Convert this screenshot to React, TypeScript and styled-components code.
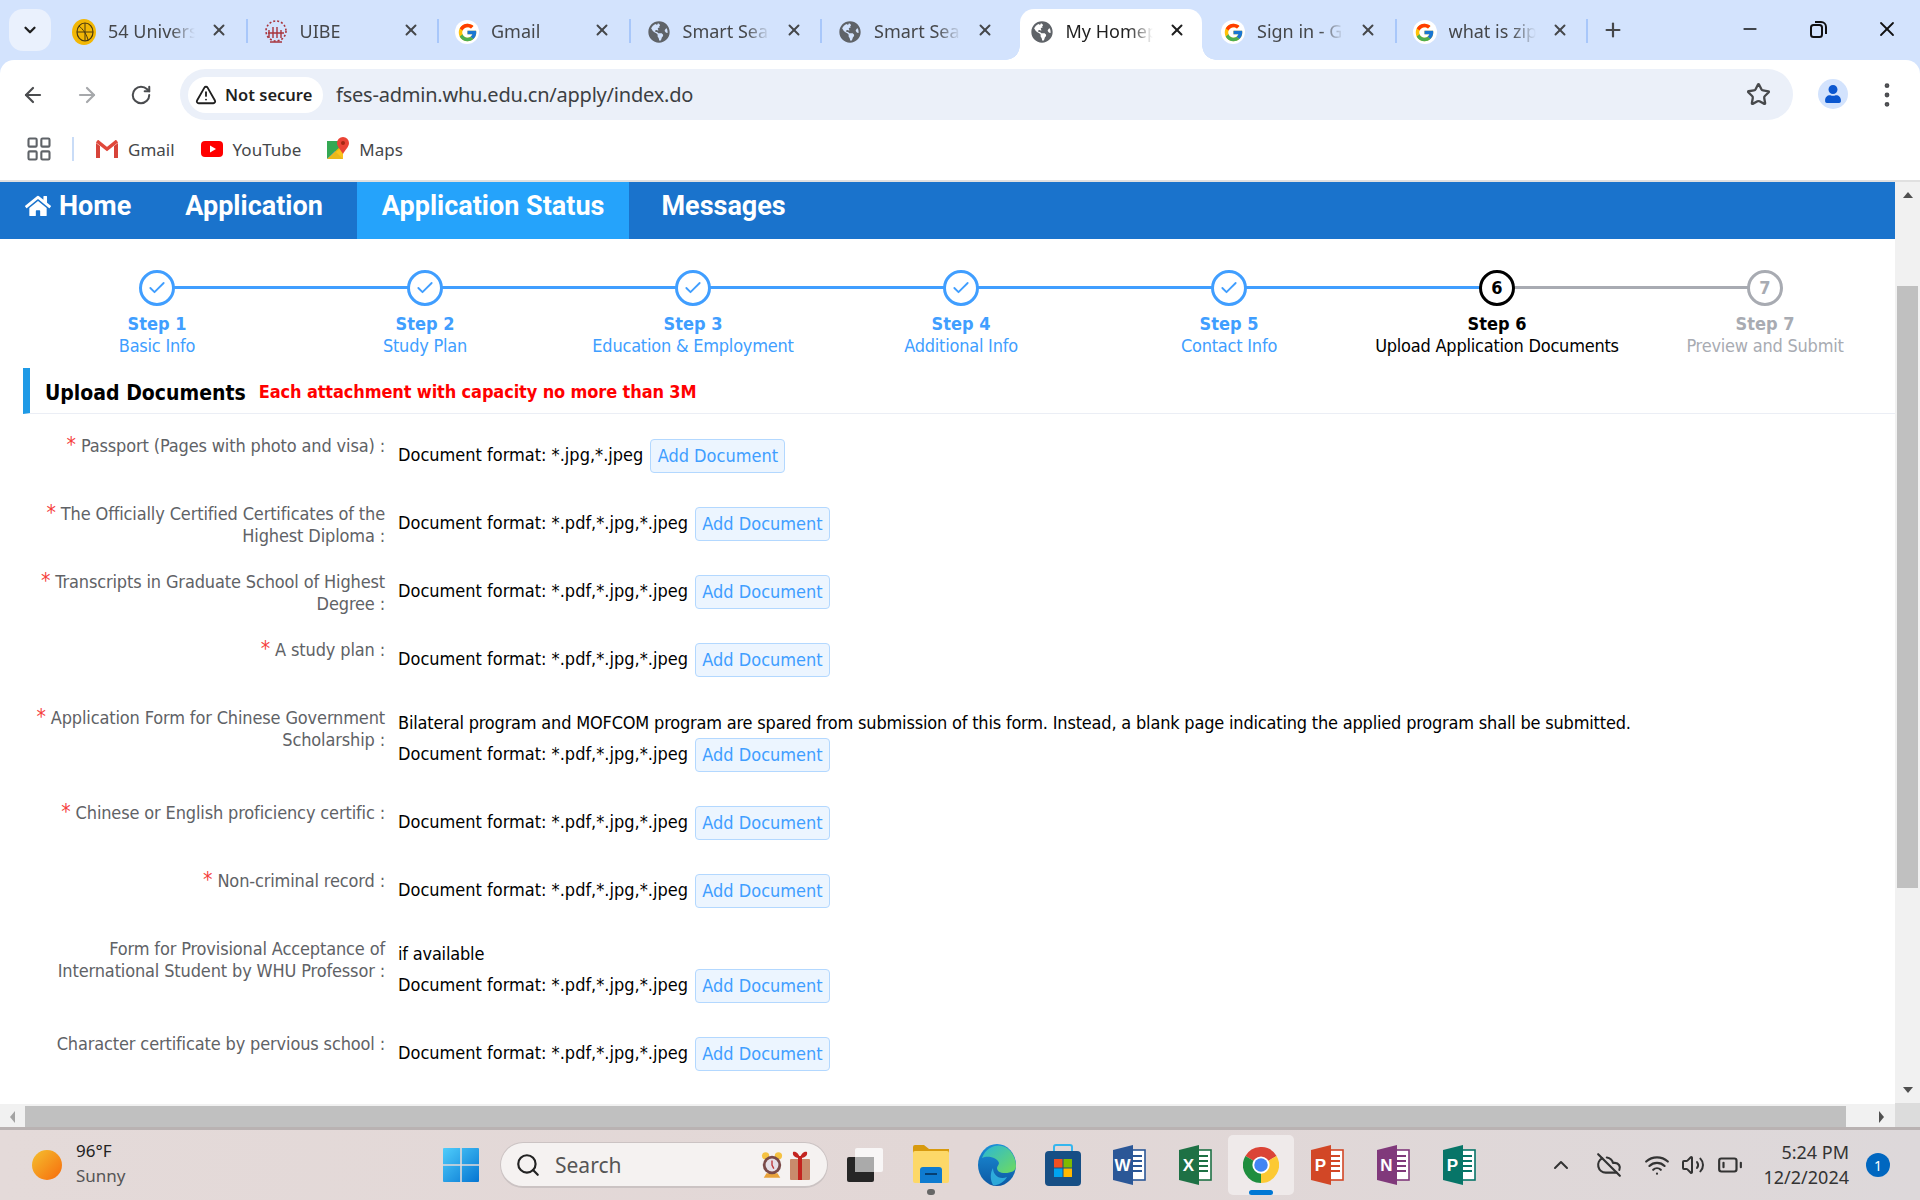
import React from 'react';
import styled, { createGlobalStyle } from 'styled-components';
import {
  ArrowLeft,
  ArrowRight,
  BatteryLow,
  Check,
  ChevronDown,
  ChevronUp,
  CloudOff,
  EllipsisVertical,
  LayoutGrid,
  Minus,
  Plus,
  RotateCw,
  Search,
  Star,
  TriangleAlert,
  Volume2,
  Wifi,
  X,
} from 'lucide-react';
import { FaGlobeAmericas, FaHome, FaUser } from 'react-icons/fa';
import { FcGoogle } from 'react-icons/fc';

const CHROME_FONT = `"Noto Sans", "Open Sans", sans-serif`;
const PAGE_FONT = `"DejaVu Sans Condensed", "DejaVu Sans", sans-serif`;

const GlobalStyle = createGlobalStyle`
  html, body {
    margin: 0;
    width: 1920px;
    height: 1200px;
    overflow: hidden;
    background: #d3e3fd;
  }
  * { box-sizing: border-box; }
`;

const Screen = styled.div`
  width: 1920px;
  height: 1200px;
  display: flex;
  flex-direction: column;
  font-family: ${CHROME_FONT};
`;

/* ---- browser chrome ---- */

const TabStrip = styled.div`
  height: 60px;
  padding: 9px 0 0 9px;
  display: flex;
  background: #d3e3fd;
`;

const TabMenu = styled.div`
  width: 42px;
  height: 42px;
  margin-right: 4px;
  border-radius: 14px;
  background: #eaf1fd;
  color: #1f1f1f;
  display: flex;
  align-items: center;
  justify-content: center;
`;

const Tab = styled.div<{ $active?: boolean; $noSep?: boolean }>`
  position: relative;
  width: 191.5px;
  height: 51px;
  padding: 0 0 7px 17px;
  display: flex;
  align-items: center;
  flex-shrink: 0;
  color: ${(p) => (p.$active ? '#1f1f1f' : '#45474a')};
  z-index: ${(p) => (p.$active ? 1 : 0)};

  &::before {
    content: '';
    display: ${(p) => (p.$active ? 'block' : 'none')};
    position: absolute;
    left: 7px;
    right: 2px;
    top: 0;
    bottom: 0;
    background: #fff;
    border-radius: 14px 14px 0 0;
  }

  &::after {
    content: '';
    display: ${(p) => (p.$noSep ? 'none' : 'block')};
    position: absolute;
    right: -1px;
    top: 10px;
    width: 2px;
    height: 24px;
    background: #a8c7fa;
  }
`;

const TabFlare = styled.span<{ $side: 'left' | 'right' }>`
  position: absolute;
  bottom: 0;
  width: 14px;
  height: 14px;
  ${(p) =>
    p.$side === 'left'
      ? 'left: -7px; background: radial-gradient(circle at 0 0, transparent 13.5px, #fff 14px);'
      : 'right: -12px; background: radial-gradient(circle at 100% 0, transparent 13.5px, #fff 14px);'}
`;

const Favicon = styled.span`
  position: relative;
  width: 24px;
  height: 24px;
  margin: 2px 12px 0 0;
  flex-shrink: 0;
  display: flex;
  align-items: center;
  justify-content: center;
  color: #5f6368;
`;

const GoogleBadge = styled.span`
  width: 24px;
  height: 24px;
  border-radius: 50%;
  background: #fff;
  display: flex;
  align-items: center;
  justify-content: center;
`;

const TabTitle = styled.span`
  position: relative;
  width: 87px;
  overflow: hidden;
  white-space: nowrap;
  font-size: 18px;
  -webkit-mask-image: linear-gradient(to right, #000 72%, transparent 100%);
  mask-image: linear-gradient(to right, #000 72%, transparent 100%);
`;

const TabClose = styled.span`
  position: relative;
  width: 20px;
  height: 20px;
  margin: 0 0 2px 14px;
  display: flex;
  align-items: center;
  justify-content: center;
`;

const NewTab = styled.div`
  margin: 9px 0 0 14px;
  width: 24px;
  height: 24px;
  color: #45474a;
  display: flex;
  align-items: center;
  justify-content: center;
`;

const WindowControls = styled.div`
  margin-left: auto;
  margin-top: -9px;
  display: flex;
`;

const WindowButton = styled.div`
  width: 68px;
  height: 58px;
  color: #111;
  display: flex;
  align-items: center;
  justify-content: center;

  &:last-child {
    width: 66px;
    margin-left: 2px;
  }
`;

const Toolbar = styled.div`
  height: 69px;
  padding: 9px 17px 0 6px;
  display: flex;
  background: #fff;
  border-radius: 14px 14px 0 0;
`;

const ToolButton = styled.div<{ $muted?: boolean }>`
  width: 54px;
  height: 51px;
  color: ${(p) => (p.$muted ? '#a6a8ab' : '#4a4c4f')};
  display: flex;
  align-items: center;
  justify-content: center;
`;

const AddressBar = styled.div`
  flex: 1;
  height: 51px;
  margin-left: 12px;
  padding: 0 22px 0 8px;
  border-radius: 26px;
  background: #ebf0f9;
  display: flex;
  align-items: center;
`;

const SecurityChip = styled.div`
  width: 135px;
  height: 36px;
  padding-left: 7px;
  border-radius: 18px;
  background: #fff;
  color: #1f1f1f;
  font-size: 16.5px;
  font-weight: 600;
  display: flex;
  align-items: center;
  gap: 8px;
`;

const UrlText = styled.span`
  margin-left: 13px;
  font-size: 20px;
  letter-spacing: -0.22px;
  color: #3c3f43;
  flex: 1;
`;

const Avatar = styled.div`
  width: 30px;
  height: 30px;
  margin: 10px 0 0 25px;
  border-radius: 50%;
  background: #d3e3fd;
  color: #0b57d0;
  display: flex;
  align-items: center;
  justify-content: center;
`;

const MenuDots = styled.div`
  width: 32px;
  height: 51px;
  margin-left: 23px;
  color: #4a4c4f;
  display: flex;
  align-items: center;
  justify-content: center;
`;

const BookmarkBar = styled.div`
  height: 53px;
  padding: 0 0 11px 25px;
  background: #fff;
  border-bottom: 2px solid #e0e0e0;
  display: flex;
  align-items: center;
  color: #45474a;
  font-size: 17px;
`;

const AppsDivider = styled.span`
  width: 2px;
  height: 24px;
  margin: 0 22px 0 19px;
  background: #c9dcf7;
`;

const Bookmark = styled.span`
  margin-right: 26px;
  display: flex;
  align-items: center;
  gap: 10px;
`;

/* ---- page ---- */

const PageArea = styled.div`
  flex: 1;
  min-height: 0;
  display: flex;
  background: #fff;
`;

const Viewport = styled.div`
  flex: 1;
  min-width: 0;
  overflow: hidden;
  font-family: ${PAGE_FONT};
  font-stretch: condensed;
  font-size: 18px;
  line-height: 22px;
`;

const NavBar = styled.nav`
  height: 57px;
  background: #1a73cc;
  display: flex;
  font-family: Roboto, "Liberation Sans", sans-serif;
  font-stretch: normal;
`;

const NavItem = styled.a<{ $active?: boolean }>`
  padding: 0 25px 9px;
  margin-right: ${(p) => (p.$active ? 7 : 9)}px;
  background: ${(p) => (p.$active ? '#25a3fb' : 'transparent')};
  color: #fff;
  font-size: 27px;
  font-weight: 700;
  display: flex;
  align-items: center;
  gap: 8px;

  &:first-child {
    margin-right: 4px;
  }
`;

const Stepper = styled.div`
  margin: 31px 0 11px 23px;
  width: 1876px;
  display: grid;
  grid-template-columns: repeat(7, 268px);
`;

type StepState = 'done' | 'current' | 'todo';

const stepColor = (s: StepState) =>
  s === 'done' ? '#409eff' : s === 'current' ? '#000' : '#a8abb2';

const Step = styled.div<{ $state: StepState; $line?: StepState }>`
  position: relative;
  display: flex;
  flex-direction: column;
  align-items: center;
  color: ${(p) => stepColor(p.$state)};

  &::after {
    content: '';
    display: ${(p) => (p.$line ? 'block' : 'none')};
    position: absolute;
    left: 50%;
    top: 16px;
    width: 100%;
    height: 3px;
    background: ${(p) => (p.$line ? stepColor(p.$line) : 'none')};
  }
`;

const StepCircle = styled.div`
  position: relative;
  z-index: 1;
  width: 36px;
  height: 36px;
  margin-bottom: 7px;
  border: 3px solid currentColor;
  border-radius: 50%;
  background: #fff;
  font-weight: 700;
  font-size: 18px;
  display: flex;
  align-items: center;
  justify-content: center;
`;

const StepTitle = styled.div`
  font-weight: 700;
`;

const StepDesc = styled.div`
  letter-spacing: -0.22px;
`;

const SectionHead = styled.div`
  height: 46px;
  margin-left: 23px;
  padding: 4px 0 0 15px;
  border-left: 7px solid #1f9ae6;
  border-bottom: 1px solid #ebeef5;
  display: flex;
  align-items: center;
  gap: 13px;
`;

const SectionTitle = styled.h2`
  margin: 0;
  font-size: 21px;
  font-weight: 700;
  color: #000;
`;

const SectionHint = styled.span`
  margin-bottom: 2px;
  font-weight: 700;
  letter-spacing: -0.12px;
  color: #f00;
`;

const Form = styled.div`
  margin: 21px 0 0 25px;
  display: flex;
  flex-direction: column;
  gap: 30px;
`;

const Row = styled.div`
  display: grid;
  grid-template-columns: 360px 1fr;
  column-gap: 13px;
`;

/* two-line labels run 6px past the field, so the rows stay evenly spaced */
const Label = styled.label`
  margin-bottom: -6px;
  text-align: right;
  color: #606266;
  letter-spacing: -0.14px;
`;

const Required = styled.span`
  color: #f5403c;
  font-size: 21px;
  line-height: 0;
  margin-right: 5px;
`;

const Field = styled.div`
  padding-top: 4px;
  color: #000;
`;

const Note = styled.div`
  margin: 1px 0 4px;
  letter-spacing: -0.19px;
`;

const DocLine = styled.div`
  display: flex;
  align-items: center;
  gap: 7px;
`;

const DocFormat = styled.span`
  margin-bottom: 2px;
`;

const AddButton = styled.button`
  height: 34px;
  width: 135px;
  padding: 0;
  border: 1px solid #b3d8ff;
  border-radius: 4px;
  background: #ecf5ff;
  color: #409eff;
  font: inherit;
`;

/* ---- scrollbars ---- */

const VScroll = styled.div`
  width: 25px;
  background: #f1f1f1;
  display: flex;
  flex-direction: column;
  align-items: center;
`;

const VThumb = styled.div`
  width: 21px;
  height: 602px;
  margin-top: 88px;
  margin-bottom: auto;
  background: #c0c0c0;
`;

const Arrow = styled.span<{ $dir: 'up' | 'down' | 'left' | 'right' }>`
  width: 0;
  height: 0;
  flex-shrink: 0;
  border-style: solid;
  border-color: transparent;
  ${(p) => {
    switch (p.$dir) {
      case 'up':
        return 'border-width: 0 5px 6px; border-bottom-color: #505050; margin-top: 10px;';
      case 'down':
        return 'border-width: 6px 5px 0; border-top-color: #505050; margin-bottom: 11px;';
      case 'left':
        return 'border-width: 6px 5px 6px 0; border-right-color: #a3a3a3;';
      default:
        return 'border-width: 6px 0 6px 5px; border-left-color: #505050;';
    }
  }}
`;

const HScroll = styled.div`
  height: 23px;
  padding-top: 2px;
  background: #f1f1f1;
  display: flex;
  align-items: center;
`;

const HEnd = styled.div<{ $w: number; $pad: number }>`
  width: ${(p) => p.$w}px;
  height: 100%;
  padding-left: ${(p) => p.$pad}px;
  flex-shrink: 0;
  display: flex;
  align-items: center;
`;

const HThumb = styled.div`
  flex: 1;
  height: 100%;
  background: #c0c0c0;
`;

const HCorner = styled.div`
  width: 25px;
  height: 25px;
  margin-top: -2px;
  background: #dcdcdc;
`;

/* ---- taskbar ---- */

const Taskbar = styled.footer`
  height: 73px;
  border-top: 3px solid #b9b2b2;
  background: linear-gradient(90deg, #e4dad9, #e2d7d6 50%, #ddd8da);
  display: flex;
  align-items: center;
  color: #222;
`;

const Weather = styled.div`
  width: 428px;
  padding-left: 32px;
  display: flex;
  align-items: center;
  gap: 14px;
`;

const Sun = styled.span`
  width: 30px;
  height: 30px;
  border-radius: 50%;
  background: linear-gradient(135deg, #f4c02f, #f76b0c);
`;

const WeatherText = styled.div`
  font-size: 17px;
  line-height: 25px;
  margin-top: -4px;
`;

const Faded = styled.div`
  color: #555;
`;

const Slot = styled.div<{ $on?: boolean }>`
  position: relative;
  width: 66px;
  height: 60px;
  flex-shrink: 0;
  border-radius: 5px;
  background: ${(p) => (p.$on ? '#efeaea' : 'transparent')};
  display: flex;
  align-items: center;
  justify-content: center;
`;

const Indicator = styled.span<{ $blue?: boolean }>`
  position: absolute;
  bottom: 0;
  left: 50%;
  transform: translateX(-50%);
  width: ${(p) => (p.$blue ? 24 : 8)}px;
  height: ${(p) => (p.$blue ? 5 : 6)}px;
  border-radius: 3px;
  background: ${(p) => (p.$blue ? '#0078d4' : '#666')};
`;

const SearchPill = styled.div`
  width: 328px;
  height: 46px;
  margin: 0 4px 0 6px;
  padding: 0 16px 0 14px;
  flex-shrink: 0;
  border: 1px solid #cbc3c3;
  border-bottom-width: 2px;
  border-radius: 23px;
  background: #f5f2f1;
  color: #555;
  font-size: 21px;
  display: flex;
  align-items: center;
  gap: 14px;
`;

const PillArt = styled.span`
  margin-left: auto;
  display: flex;
  gap: 6px;
`;

const Tray = styled.div`
  flex: 1;
  padding: 0 30px 0 45px;
  display: flex;
  align-items: center;
  color: #333;
`;

const TrayIcon = styled.span<{ $w: number }>`
  width: ${(p) => p.$w}px;
  flex-shrink: 0;
  display: flex;
  justify-content: center;
`;

const Clock = styled.div`
  margin: 0 17px 0 auto;
  text-align: right;
  font-size: 18px;
  line-height: 25px;
`;

const Badge = styled.span`
  width: 24px;
  height: 24px;
  border-radius: 50%;
  background: #0067c0;
  color: #fff;
  font-size: 14px;
  display: flex;
  align-items: center;
  justify-content: center;
`;

/* ---- drawings ---- */

const RestoreIcon = () => (
  <svg width="17" height="17" viewBox="0 0 17 17" fill="none" stroke="currentColor" strokeWidth="2">
    <rect x="1" y="4" width="11" height="12" rx="2.5" />
    <path d="M5 1h6a5 5 0 0 1 5 5v7" />
  </svg>
);

const GmailIcon = () => (
  <svg width="22" height="18" viewBox="0 0 22 18">
    <path d="M0 3v15h4V6z" fill="#d7443a" />
    <path d="M22 3v15h-4V6z" fill="#d7443a" />
    <path d="M1 1l10 8 10-8" fill="none" stroke="#e0483b" strokeWidth="3.4" />
  </svg>
);

const YoutubeIcon = () => (
  <svg width="22" height="16" viewBox="0 0 22 16">
    <rect width="22" height="16" rx="4" fill="#f00" />
    <path d="M9 4.5l6 3.5-6 3.5z" fill="#fff" />
  </svg>
);

const MapsIcon = () => (
  <svg width="22" height="24" viewBox="0 0 22 24">
    <path d="M0 4h13v8L0 22z" fill="#34a853" />
    <path d="M0 22l8-8 8 8z" fill="#4c8bf5" />
    <path d="M0 22L16 7v15z" fill="#fbbc04" opacity=".9" />
    <path d="M16 0a6 6 0 0 1 6 6c0 4-4 7-6 11-2-4-6-7-6-11a6 6 0 0 1 6-6z" fill="#ea4335" />
    <circle cx="16" cy="6" r="2" fill="#a52714" />
  </svg>
);

const WindowsLogo = () => (
  <svg width="36" height="36" viewBox="0 0 36 36">
    <defs>
      <linearGradient id="winBlue" x1="0" y1="0" x2="1" y2="1">
        <stop offset="0" stopColor="#4fcdfb" />
        <stop offset="1" stopColor="#0575d2" />
      </linearGradient>
    </defs>
    <path d="M1 1h16.2v16.2H0V2a1 1 0 0 1 1-1zM18.8 1H35a1 1 0 0 1 1 1v15.2H18.8zM0 18.8h17.2V35H1a1 1 0 0 1-1-1zM18.8 18.8H36V34a1 1 0 0 1-1 1H18.8z" fill="url(#winBlue)" />
  </svg>
);

const AlarmIcon = () => (
  <svg width="22" height="30" viewBox="0 0 24 30">
    <circle cx="5" cy="5" r="4" fill="#f5c242" />
    <circle cx="19" cy="5" r="4" fill="#f5c242" />
    <path d="M6 24h12l3 5H3z" fill="#e8a23a" />
    <circle cx="12" cy="15" r="10" fill="#7a4a48" />
    <circle cx="12" cy="15" r="7" fill="#e5dfe6" />
    <path d="M12 10v5l2 4" stroke="#c0393b" strokeWidth="1.5" fill="none" />
  </svg>
);

const GiftIcon = () => (
  <svg width="22" height="30" viewBox="0 0 22 30">
    <rect x="1" y="9" width="20" height="21" rx="1" fill="#c98a6c" />
    <rect x="9" y="6" width="4" height="24" fill="#c3231f" />
    <path d="M11 8C7 8 3 6 4 2c3-1 6 2 7 6zm0 0c4 0 8-2 7-6-3-1-6 2-7 6z" fill="#c3231f" />
  </svg>
);

const TaskViewIcon = () => (
  <svg width="36" height="34" viewBox="0 0 36 34">
    <rect x="0" y="9" width="27" height="25" rx="2" fill="#262626" />
    <rect x="8" y="0" width="28" height="24" rx="2" fill="#f8f6f6" />
    <rect x="8" y="9" width="19" height="15" fill="#aaa" />
  </svg>
);

const FolderIcon = () => (
  <svg width="36" height="42" viewBox="0 0 36 42">
    <path d="M0 3a2 2 0 0 1 2-2h9l5 4h20v6H0z" fill="#d89a0e" />
    <rect x="0" y="7" width="36" height="32" rx="2" fill="#fdd868" />
    <path d="M7 39V26a3 3 0 0 1 3-3h16a3 3 0 0 1 3 3v13z" fill="#0f7bd0" />
    <rect x="12" y="29" width="12" height="2" fill="#063f72" />
  </svg>
);

const EdgeIcon = () => (
  <svg width="38" height="42" viewBox="0 0 38 42">
    <defs>
      <linearGradient id="edgeBlue" x1="0" y1="0" x2="0" y2="1">
        <stop offset="0" stopColor="#1c8fd8" />
        <stop offset="1" stopColor="#0c59a4" />
      </linearGradient>
      <linearGradient id="edgeGreen" x1="0" y1="0" x2="1" y2="1">
        <stop offset="0" stopColor="#2bb7d8" />
        <stop offset="1" stopColor="#6fdb5d" />
      </linearGradient>
    </defs>
    <ellipse cx="19" cy="21" rx="19" ry="21" fill="url(#edgeBlue)" />
    <path d="M4 14C8 3 18 0 24 2c9 2 14 12 14 20 0 5-5 7-11 7-5 0-8-2-8-5 0-2 2-3 2-5-1-5-11-8-17-5z" fill="url(#edgeGreen)" />
    <path d="M15 24c0 7 6 12 14 9-3 5-9 9-14 8-3-5-3-12 0-17z" fill="#38c2e8" opacity=".75" />
  </svg>
);

const StoreIcon = () => (
  <svg width="36" height="42" viewBox="0 0 36 42">
    <path d="M9 8V3a2 2 0 0 1 2-2h14a2 2 0 0 1 2 2v5" fill="none" stroke="#35b6ee" strokeWidth="2" />
    <rect x="0" y="7" width="36" height="35" rx="4" fill="#174f85" />
    <rect x="9" y="15" width="8.5" height="8.5" fill="#f25022" />
    <rect x="18.5" y="15" width="8.5" height="8.5" fill="#7fba00" />
    <rect x="9" y="24.5" width="8.5" height="8.5" fill="#00a4ef" />
    <rect x="18.5" y="24.5" width="8.5" height="8.5" fill="#ffb900" />
  </svg>
);

const OfficeIcon = ({ letter, color }: { letter: string; color: string }) => (
  <svg width="33" height="40" viewBox="0 0 33 40">
    <rect x="16" y="5" width="16" height="30" fill="#fff" stroke={color} strokeWidth="1.6" />
    <path d="M20 11h9M20 16h9M20 21h9M20 26h9" stroke={color} strokeWidth="2" />
    <path d="M0 5L20 0v40L0 35z" fill={color} />
    <text x="9.5" y="26" fill="#fff" fontSize="17" fontWeight="700" textAnchor="middle" fontFamily="Liberation Sans, sans-serif">
      {letter}
    </text>
  </svg>
);

const ChromeIcon = () => (
  <svg width="36" height="36" viewBox="0 0 48 48">
    <path d="M24 24L3.2 12A24 24 0 0 1 44.8 12z" fill="#db4437" />
    <path d="M24 24L44.8 12A24 24 0 0 1 24 48z" fill="#fcc934" />
    <path d="M24 24L24 48A24 24 0 0 1 3.2 12z" fill="#1e8e3e" />
    <circle cx="24" cy="24" r="11.5" fill="#fff" />
    <circle cx="24" cy="24" r="9" fill="#4285f4" />
  </svg>
);

/* ---- data ---- */

interface TabData {
  title: string;
  icon: 'globe' | 'google' | 'gold' | 'uibe';
  active?: boolean;
  noSep?: boolean;
}

const tabs: TabData[] = [
  { title: '54 Universities', icon: 'gold' },
  { title: 'UIBE', icon: 'uibe' },
  { title: 'Gmail', icon: 'google' },
  { title: 'Smart Search', icon: 'globe' },
  { title: 'Smart Search', icon: 'globe', noSep: true },
  { title: 'My Homepage', icon: 'globe', active: true, noSep: true },
  { title: 'Sign in - Google', icon: 'google' },
  { title: 'what is zip code', icon: 'google' },
];

const TabIcon = ({ icon }: { icon: TabData['icon'] }) => {
  if (icon === 'globe') return <FaGlobeAmericas size={22} />;
  if (icon === 'google') {
    return (
      <GoogleBadge>
        <FcGoogle size={21} />
      </GoogleBadge>
    );
  }
  if (icon === 'gold') {
    return (
      <svg width="24" height="26" viewBox="0 0 24 26">
        <ellipse cx="12" cy="13" rx="12" ry="13" fill="#f2b705" />
        <ellipse cx="13" cy="13" rx="8" ry="9" fill="none" stroke="#4a3a10" strokeWidth="1.2" />
        <path d="M5 13h16M13 4v18M7 7c4 3 8 9 9 14" fill="none" stroke="#4a3a10" strokeWidth="1" />
      </svg>
    );
  }
  return (
    <svg width="24" height="26" viewBox="0 0 24 26">
      <circle cx="12" cy="12" r="10" fill="none" stroke="#a8343c" strokeWidth="1.6" strokeDasharray="2 2" />
      <path d="M5 19V11M9 19V8M13 19V8M17 19v-8M4 14h16M6 23h12" stroke="#a8343c" strokeWidth="1.4" />
    </svg>
  );
};

const steps: { title: string; desc: string; state: StepState; line?: StepState }[] = [
  { title: 'Step 1', desc: 'Basic Info', state: 'done', line: 'done' },
  { title: 'Step 2', desc: 'Study Plan', state: 'done', line: 'done' },
  { title: 'Step 3', desc: 'Education & Employment', state: 'done', line: 'done' },
  { title: 'Step 4', desc: 'Additional Info', state: 'done', line: 'done' },
  { title: 'Step 5', desc: 'Contact Info', state: 'done', line: 'done' },
  { title: 'Step 6', desc: 'Upload Application Documents', state: 'current', line: 'todo' },
  { title: 'Step 7', desc: 'Preview and Submit', state: 'todo' },
];

const PDF_FORMAT = 'Document format: *.pdf,*.jpg,*.jpeg';

const documents: { label: string; required?: boolean; note?: string; format?: string }[] = [
  { label: 'Passport (Pages with photo and visa) :', required: true, format: 'Document format: *.jpg,*.jpeg' },
  { label: 'The Officially Certified Certificates of the Highest Diploma :', required: true },
  { label: 'Transcripts in Graduate School of Highest Degree :', required: true },
  { label: 'A study plan :', required: true },
  {
    label: 'Application Form for Chinese Government Scholarship :',
    required: true,
    note: 'Bilateral program and MOFCOM program are spared from submission of this form. Instead, a blank page indicating the applied program shall be submitted.',
  },
  { label: 'Chinese or English proficiency certific :', required: true },
  { label: 'Non-criminal record :', required: true },
  { label: 'Form for Provisional Acceptance of International Student by WHU Professor :', note: 'if available' },
  { label: 'Character certificate by pervious school :' },
];

const App: React.FC = () => (
  <Screen>
    <GlobalStyle />
    <TabStrip>
      <TabMenu>
        <ChevronDown size={18} strokeWidth={3} />
      </TabMenu>
      {tabs.map((tab, i) => (
        <Tab key={i} $active={tab.active} $noSep={tab.noSep}>
          {tab.active && <TabFlare $side="left" />}
          {tab.active && <TabFlare $side="right" />}
          <Favicon>
            <TabIcon icon={tab.icon} />
          </Favicon>
          <TabTitle>{tab.title}</TabTitle>
          <TabClose>
            <X size={18} strokeWidth={2.6} />
          </TabClose>
        </Tab>
      ))}
      <NewTab>
        <Plus size={22} strokeWidth={2.4} />
      </NewTab>
      <WindowControls>
        <WindowButton>
          <Minus size={20} strokeWidth={2} />
        </WindowButton>
        <WindowButton>
          <RestoreIcon />
        </WindowButton>
        <WindowButton>
          <X size={24} strokeWidth={1.8} />
        </WindowButton>
      </WindowControls>
    </TabStrip>

    <Toolbar>
      <ToolButton>
        <ArrowLeft size={24} strokeWidth={2.2} />
      </ToolButton>
      <ToolButton $muted>
        <ArrowRight size={24} strokeWidth={2.2} />
      </ToolButton>
      <ToolButton>
        <RotateCw size={22} strokeWidth={2.2} />
      </ToolButton>
      <AddressBar>
        <SecurityChip>
          <TriangleAlert size={22} strokeWidth={2} />
          Not secure
        </SecurityChip>
        <UrlText>fses-admin.whu.edu.cn/apply/index.do</UrlText>
        <Star size={25} strokeWidth={2.2} color="#47494c" />
      </AddressBar>
      <Avatar>
        <FaUser size={18} />
      </Avatar>
      <MenuDots>
        <EllipsisVertical size={32} strokeWidth={1.6} />
      </MenuDots>
    </Toolbar>

    <BookmarkBar>
      <LayoutGrid size={28} strokeWidth={1.8} color="#5f6368" />
      <AppsDivider />
      <Bookmark>
        <GmailIcon />
        Gmail
      </Bookmark>
      <Bookmark>
        <YoutubeIcon />
        YouTube
      </Bookmark>
      <Bookmark>
        <MapsIcon />
        Maps
      </Bookmark>
    </BookmarkBar>

    <PageArea>
      <Viewport>
        <NavBar>
          <NavItem>
            <FaHome size={26} />
            Home
          </NavItem>
          <NavItem>Application</NavItem>
          <NavItem $active>Application Status</NavItem>
          <NavItem>Messages</NavItem>
        </NavBar>

        <Stepper>
          {steps.map((s, i) => (
            <Step key={s.title} $state={s.state} $line={s.line}>
              <StepCircle>
                {s.state === 'done' ? <Check size={20} strokeWidth={2.2} /> : i + 1}
              </StepCircle>
              <StepTitle>{s.title}</StepTitle>
              <StepDesc>{s.desc}</StepDesc>
            </Step>
          ))}
        </Stepper>

        <SectionHead>
          <SectionTitle>Upload Documents</SectionTitle>
          <SectionHint>Each attachment with capacity no more than 3M</SectionHint>
        </SectionHead>

        <Form>
          {documents.map((d) => (
            <Row key={d.label}>
              <Label>
                {d.required && <Required>*</Required>}
                {d.label}
              </Label>
              <Field>
                {d.note && <Note>{d.note}</Note>}
                <DocLine>
                  <DocFormat>{d.format ?? PDF_FORMAT}</DocFormat>
                  <AddButton>Add Document</AddButton>
                </DocLine>
              </Field>
            </Row>
          ))}
        </Form>
      </Viewport>
      <VScroll>
        <Arrow $dir="up" />
        <VThumb />
        <Arrow $dir="down" />
      </VScroll>
    </PageArea>

    <HScroll>
      <HEnd $w={25} $pad={10}>
        <Arrow $dir="left" />
      </HEnd>
      <HThumb />
      <HEnd $w={49} $pad={33}>
        <Arrow $dir="right" />
      </HEnd>
      <HCorner />
    </HScroll>

    <Taskbar>
      <Weather>
        <Sun />
        <WeatherText>
          96°F
          <Faded>Sunny</Faded>
        </WeatherText>
      </Weather>
      <Slot>
        <WindowsLogo />
      </Slot>
      <SearchPill>
        <Search size={26} strokeWidth={2} color="#222" />
        Search
        <PillArt>
          <AlarmIcon />
          <GiftIcon />
        </PillArt>
      </SearchPill>
      <Slot>
        <TaskViewIcon />
      </Slot>
      <Slot>
        <FolderIcon />
        <Indicator />
      </Slot>
      <Slot>
        <EdgeIcon />
      </Slot>
      <Slot>
        <StoreIcon />
      </Slot>
      <Slot>
        <OfficeIcon letter="W" color="#2b5797" />
      </Slot>
      <Slot>
        <OfficeIcon letter="X" color="#1e7145" />
      </Slot>
      <Slot $on>
        <ChromeIcon />
        <Indicator $blue />
      </Slot>
      <Slot>
        <OfficeIcon letter="P" color="#d24726" />
      </Slot>
      <Slot>
        <OfficeIcon letter="N" color="#80397b" />
      </Slot>
      <Slot>
        <OfficeIcon letter="P" color="#077568" />
      </Slot>
      <Tray>
        <TrayIcon $w={48}>
          <ChevronUp size={24} />
        </TrayIcon>
        <TrayIcon $w={48}>
          <CloudOff size={26} />
        </TrayIcon>
        <TrayIcon $w={48}>
          <Wifi size={26} />
        </TrayIcon>
        <TrayIcon $w={24}>
          <Volume2 size={24} />
        </TrayIcon>
        <TrayIcon $w={50}>
          <BatteryLow size={26} />
        </TrayIcon>
        <Clock>
          5:24 PM
          <br />
          12/2/2024
        </Clock>
        <Badge>1</Badge>
      </Tray>
    </Taskbar>
  </Screen>
);

export default App;
